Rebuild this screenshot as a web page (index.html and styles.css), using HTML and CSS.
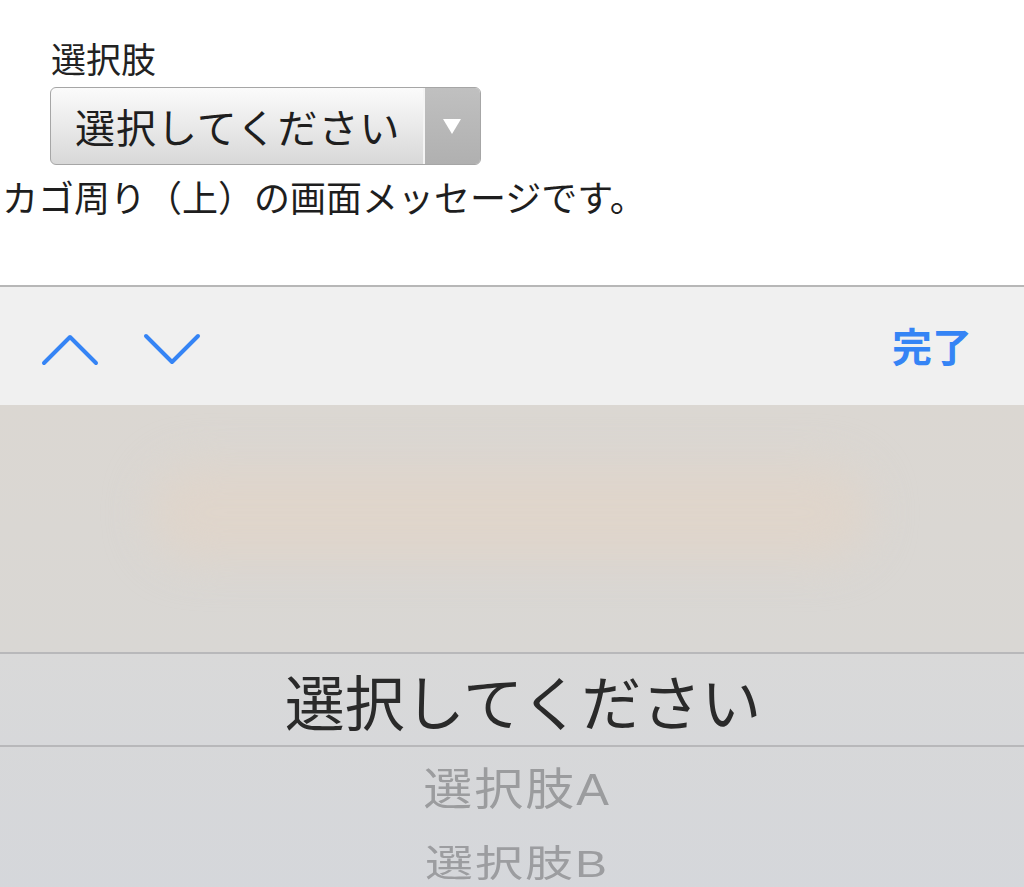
FILE: index.html
```html
<!DOCTYPE html>
<html lang="ja">
<head>
<meta charset="utf-8">
<link rel="stylesheet" href="styles.css">
</head>
<body>
<div class="page">
  <div class="form">
    <div class="field">
      <div class="label">選択肢</div>
      <div class="select">
        <span class="select-text">選択してください</span>
        <span class="select-arrow"><span class="tri"></span></span>
      </div>
    </div>
    <p class="message">カゴ周り（上）の画面メッセージです。</p>
  </div>
  <div class="toolbar">
    <div class="nav">
      <svg class="chev" width="60" height="34" viewBox="0 0 60 34"><polyline points="3,31 29,5 55,31" fill="none" stroke="#3584f5" stroke-width="4" stroke-linecap="round" stroke-linejoin="round"/></svg>
      <svg class="chev" width="60" height="34" viewBox="0 0 60 34"><polyline points="3,4 29,30 55,4" fill="none" stroke="#3584f5" stroke-width="4" stroke-linecap="round" stroke-linejoin="round"/></svg>
    </div>
    <div class="done">完了</div>
  </div>
  <div class="picker">
    <div class="blur-area"><div class="blob"></div></div>
    <div class="wheel">
      <div class="row selected">選択してください</div>
      <div class="row opt-a"><span class="sq">選択肢A</span></div>
      <div class="row opt-b"><span class="sq">選択肢B</span></div>
    </div>
  </div>
</div>
</body>
</html>
```
FILE: styles.css
```css
html, body {
  margin: 0;
  padding: 0;
  background: #fff;
}
body {
  font-family: "Noto Sans CJK JP", "Noto Sans", sans-serif;
  color: #222;
  width: 1024px;
  height: 887px;
  overflow: hidden;
}
.page {
  display: flex;
  flex-direction: column;
  height: 887px;
}
.form {
  height: 285px;
  flex: none;
  box-sizing: border-box;
  padding-top: 33px;
}
.field {
  padding-left: 50px;
}
.label {
  font-size: 35px;
  line-height: 49px;
  padding-left: 1px;
  color: #222;
}
.select {
  margin-top: 5px;
  width: 431px;
  height: 78px;
  box-sizing: border-box;
  border: 1px solid #a6a6a6;
  border-radius: 6px;
  background: linear-gradient(#fbfbfb, #e6e6e6 60%, #d8d8d8);
  display: flex;
  align-items: center;
  overflow: hidden;
}
.select-text {
  flex: 1;
  font-size: 40px;
  padding-left: 24px;
  color: #1e1e1e;
  letter-spacing: 1px;
}
.select-arrow {
  width: 55px;
  align-self: stretch;
  background: linear-gradient(#c0c0c0, #b0b0b0);
  border-left: 2px solid #f4f4f4;
  display: flex;
  align-items: center;
  justify-content: center;
}
.tri {
  width: 0;
  height: 0;
  border-left: 9px solid transparent;
  border-right: 9px solid transparent;
  border-top: 15px solid #fff;
  margin-right: 2px;
}
.message {
  margin: 6px 0 0 2px;
  font-size: 36px;
  line-height: 50px;
  color: #1e1e1e;
}
.toolbar {
  height: 120px;
  flex: none;
  box-sizing: border-box;
  border-top: 2px solid #b7b7b7;
  background: #f0f0f0;
  display: flex;
  align-items: center;
  justify-content: space-between;
  padding: 0 52px 0 41px;
}
.nav {
  display: flex;
  gap: 42px;
  margin-top: 6px;
}
.chev {
  display: block;
}
.done {
  font-size: 40px;
  font-weight: bold;
  color: #3584f5;
  line-height: 1;
  margin-top: -2px;
}
.picker {
  flex: 1;
  display: flex;
  flex-direction: column;
  background: #d8d8da;
}
.blur-area {
  height: 247px;
  flex: none;
  position: relative;
  overflow: hidden;
  background: linear-gradient(#dbd7d2, #d9d7d4);
}
.blob {
  position: absolute;
  left: 150px;
  top: 60px;
  width: 720px;
  height: 95px;
  border-radius: 60px;
  background: #dfd5cb;
  filter: blur(22px);
}
.wheel {
  flex: 1;
  display: flex;
  flex-direction: column;
  align-items: center;
  background: linear-gradient(#d8d8d8, #d5d7db);
}
.row {
  width: 100%;
  text-align: center;
}
.selected {
  height: 95px;
  flex: none;
  box-sizing: border-box;
  border-top: 2px solid #b8b8ba;
  border-bottom: 2px solid #b8b8ba;
  font-size: 60px;
  line-height: 91px;
  padding-left: 22px;
  color: #2a2a2a;
  background: linear-gradient(#d9d9d9, #d7d8da);
}
.sq {
  display: inline-block;
  font-family: "Liberation Sans", "Noto Sans CJK JP", sans-serif;
  letter-spacing: 2px;
}
.opt-a {
  font-size: 49px;
  line-height: 77px;
  color: #9b9c9e;
  padding-left: 10px;
}
.opt-a .sq {
  transform: scaleY(0.9);
}
.opt-b {
  font-size: 48px;
  line-height: 62px;
  color: #9c9da0;
  padding-left: 10px;
}
.opt-b .sq {
  transform: scaleY(0.78);
}
```
